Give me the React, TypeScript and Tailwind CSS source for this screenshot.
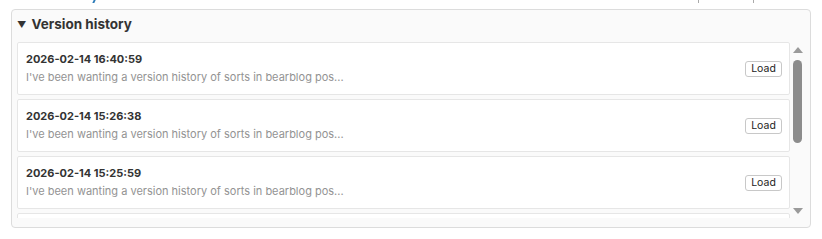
import React from 'react';

const versions = [
  { date: '2026-02-14 16:40:59', text: "I've been wanting a version history of sorts in bearblog pos..." },
  { date: '2026-02-14 15:26:38', text: "I've been wanting a version history of sorts in bearblog pos..." },
  { date: '2026-02-14 15:25:59', text: "I've been wanting a version history of sorts in bearblog pos..." },
];

function Scrollbar() {
  return (
    <div className="w-[15px] h-full flex flex-col items-center">
      <svg width="10" height="6" viewBox="0 0 10 6" className="mt-[5px]">
        <polygon points="5,0 10,6 0,6" fill="#9a9a9a" />
      </svg>
      <div className="mt-[7px] w-[9px] h-[83px] rounded-[5px] bg-[#8c8c8c]" />
      <div className="flex-1" />
      <svg width="10" height="6" viewBox="0 0 10 6" className="mb-[4px]">
        <polygon points="0,0 10,0 5,6" fill="#9a9a9a" />
      </svg>
    </div>
  );
}

export default function App() {
  return (
    <div className="w-[822px] h-[239px] bg-white overflow-hidden" style={{ fontFamily: 'Inter, "Noto Sans", sans-serif' }}>
      {/* cut-off line above the panel */}
      <div className="h-[4px] relative">
        <span className="absolute left-[93px] top-0 h-[3px] w-[1.5px] bg-[#2a7ab8] skew-x-[-25deg]" />
        <span className="absolute left-[698px] top-0 h-[3px] w-[1px] bg-[#aaa]" />
        <span className="absolute left-[753px] top-0 h-[3px] w-[1px] bg-[#aaa]" />
      </div>
      <div className="mx-[11px] mt-[5px] h-[219px] border border-[#dcdcdc] rounded-[4px] bg-[#fafafa] px-[5px] flex flex-col">
        <div className="h-[32px] flex items-center gap-[5px] font-bold text-[#333] pb-[3px]">
          <span className="text-[9px] leading-none">▼</span>
          <span className="text-[13.5px]">Version history</span>
        </div>
        <div className="h-[176px] flex">
          <div className="flex-1 overflow-hidden">
            {versions.map((v, i) => (
              <div key={i} className="h-[53px] mb-[4px] bg-white border border-[#e6e6e6] rounded-[2px] flex items-center pl-[8px] pr-[7px]">
                <div className="flex-1 flex flex-col gap-[4px] -mt-[1px]">
                  <div className="text-[11px] font-bold text-[#333] leading-[14px]">{v.date}</div>
                  <div className="text-[11px] text-[#939393] leading-[14px]">{v.text}</div>
                </div>
                <button className="h-[16px] w-[37px] text-[10.5px] leading-[14px] text-[#222] bg-white border border-[#c8c8c8] rounded-[3px]">
                  Load
                </button>
              </div>
            ))}
            <div className="h-[53px] bg-white border border-[#e6e6e6] rounded-[2px]" />
          </div>
          <Scrollbar />
        </div>
      </div>
    </div>
  );
}
